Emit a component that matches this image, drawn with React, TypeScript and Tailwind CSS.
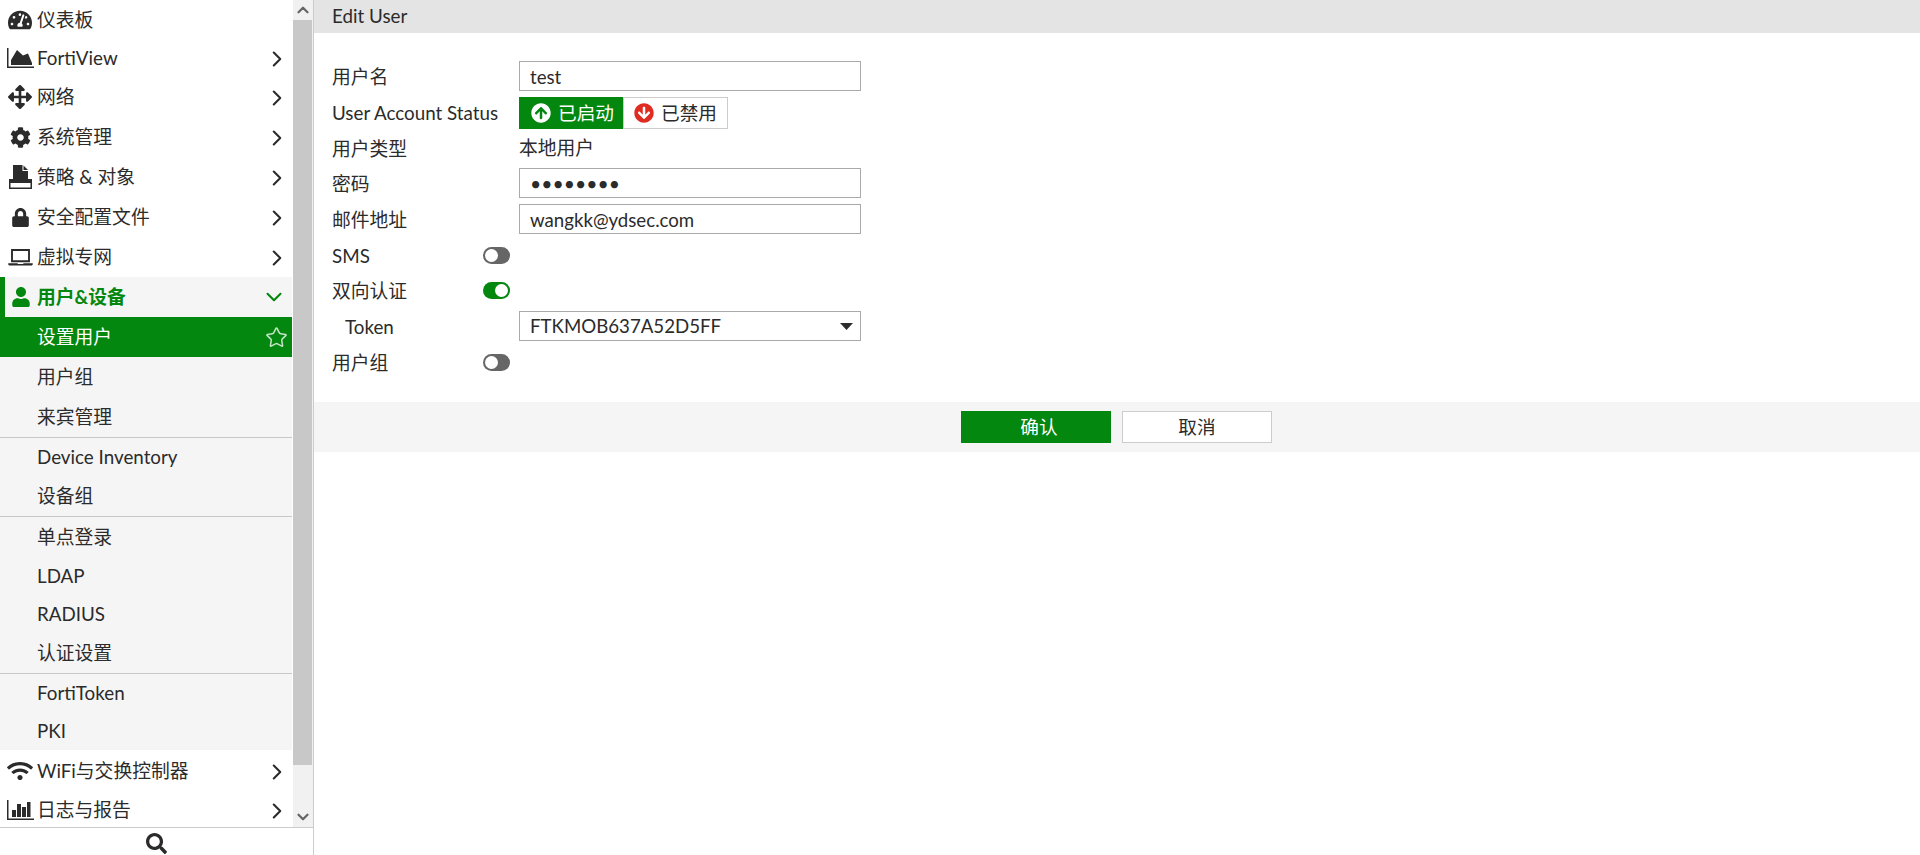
import { ChevronDown, ChevronRight, ChevronUp, Star } from 'lucide-react';
import { FaArrowCircleDown, FaArrowCircleUp, FaArrowsAlt, FaCog, FaLock, FaSearch, FaTachometerAlt, FaUser, FaWifi } from 'react-icons/fa';

const font = "font-['Lato','Noto_Sans_CJK_SC',sans-serif]";

function AreaIcon() {
  return (
    <svg width="27" height="20" viewBox="0 0 27 20" className="fill-[#2b2b2b]">
      <path d="M0 0h1.500v18.500H27V20H0z" />
      <path d="M4 17V12L10 2l6 5.500 5-2 4 9.500V17z" />
    </svg>
  );
}

function BarsIcon() {
  return (
    <svg width="27" height="20" viewBox="0 0 27 20" className="fill-[#2b2b2b]">
      <path d="M0 0h1.500v18.500H27V20H0z" />
      <path d="M5 10h4v7H5zM10 4h4v13h-4zM15 7h4v10h-4zM20 2h3.500v15H20z" />
    </svg>
  );
}

function PolicyIcon() {
  return (
    <svg width="23" height="24" viewBox="0 0 23 24" className="fill-[#2b2b2b]">
      <path d="M4 0h9.500v6H19v10H4z" />
      <path d="M14.500 0.500l4.500 4.500h-4.500z" />
      <path d="M0 14h23v10H0zm1.500 4v4.500h20V18z" fillRule="evenodd" />
    </svg>
  );
}

function LaptopIcon() {
  return (
    <svg width="25" height="17" viewBox="0 0 26 18" className="fill-[#2b2b2b]">
      <path d="M3 0h20v14H3zm2 2v10h16V2z" fillRule="evenodd" />
      <path d="M0 15h10v1h6v-1h10v1.500l-1 1H1l-1-1z" />
    </svg>
  );
}

function NavRow({ icon, label, h, arrow = true }: { icon: React.ReactNode; label: string; h: string; arrow?: boolean }) {
  return (
    <div className={`flex items-center ${h}`}>
      <span className="flex w-[37px] shrink-0 items-center justify-center pl-[3px]">{icon}</span>
      <span className="flex-1 text-[18.8px] leading-[24px]">{label}</span>
      {arrow && <ChevronRight size={26} strokeWidth={1.9} className="mr-[3px] mt-[2px] text-[#2b2b2b]" />}
    </div>
  );
}

function SubRow({ label, h, active }: { label: string; h: string; active?: boolean }) {
  return (
    <div className={`flex items-center pl-[37px] text-[18.8px] leading-[24px] ${h} ${active ? 'bg-[#03870f] text-white' : ''}`}>
      <span className="flex-1">{label}</span>
      {active && <Star size={23} strokeWidth={1.6} className="mr-[4px] text-[#c4e3c6]" />}
    </div>
  );
}

function Toggle({ on }: { on?: boolean }) {
  return (
    <div className={`flex h-[17px] w-[27px] items-center rounded-full p-[2px] ${on ? 'justify-end bg-[#03870f]' : 'justify-start bg-[#666666]'}`}>
      <div className="h-[13px] w-[13px] rounded-full bg-white" />
    </div>
  );
}

const inputCls = `h-[30px] w-[342px] border border-[#aaaaaa] bg-white px-[10px] pt-[1px] text-[#2b2b2b] outline-none ${font}`;

function Label({ children, w = 'w-[187px]' }: { children: React.ReactNode; w?: string }) {
  return <div className={`${w} shrink-0 text-[18.8px] leading-[24px]`}>{children}</div>;
}

export default function App() {
  return (
    <div className={`flex h-[855px] w-[1920px] overflow-hidden bg-white text-[#2b2b2b] ${font}`}>
      {/* sidebar */}
      <aside className="flex w-[314px] shrink-0 flex-col border-r border-[#cccccc]">
        <div className="flex h-[828px] border-b border-[#cccccc]">
          <nav className="w-[293px] shrink-0">
            <div className="pt-[1px]"><NavRow h="h-[37px]" icon={<FaTachometerAlt size={24} />} label="仪表板" arrow={false} /></div>
            <NavRow h="h-[39px]" icon={<AreaIcon />} label="FortiView" />
            <NavRow h="h-[40px]" icon={<FaArrowsAlt size={24} />} label="网络" />
            <NavRow h="h-[40px]" icon={<FaCog size={21} />} label="系统管理" />
            <NavRow h="h-[40px]" icon={<PolicyIcon />} label="策略 & 对象" />
            <NavRow h="h-[40px]" icon={<FaLock size={19} />} label="安全配置文件" />
            <NavRow h="h-[40px]" icon={<LaptopIcon />} label="虚拟专网" />
            <div className="mr-[1px] bg-[#f5f5f5]">
              <div className="flex h-[40px] items-center border-l-[5px] border-[#03870f] text-[#03870f]">
                <span className="flex w-[32px] shrink-0 items-center justify-center"><FaUser size={20} /></span>
                <span className="flex-1 text-[18.8px] font-bold leading-[24px]">用户&设备</span>
                <ChevronDown size={26} strokeWidth={1.9} className="mr-[5px]" />
              </div>
              <SubRow h="h-[40px]" label="设置用户" active />
              <SubRow h="h-[40px]" label="用户组" />
              <SubRow h="h-[40px]" label="来宾管理" />
              <div className="border-t border-[#c8c8c8]">
                <SubRow h="h-[38px]" label="Device Inventory" />
                <SubRow h="h-[40px]" label="设备组" />
              </div>
              <div className="border-t border-[#c8c8c8]">
                <SubRow h="h-[40px]" label="单点登录" />
                <SubRow h="h-[37px]" label="LDAP" />
                <SubRow h="h-[39px]" label="RADIUS" />
                <SubRow h="h-[40px]" label="认证设置" />
              </div>
              <div className="border-t border-[#c8c8c8]">
                <SubRow h="h-[38px]" label="FortiToken" />
                <SubRow h="h-[38px]" label="PKI" />
              </div>
            </div>
            <NavRow h="h-[41px]" icon={<FaWifi size={26} />} label="WiFi与交换控制器" />
            <div className="pt-[1px]"><NavRow h="h-[35px]" icon={<BarsIcon />} label="日志与报告" /></div>
          </nav>
          {/* scrollbar */}
          <div className="flex w-[20px] shrink-0 flex-col bg-[#f1f1f1]">
            <div className="flex h-[20px] items-center justify-center"><ChevronUp size={18} strokeWidth={3} className="text-[#666666]" /></div>
            <div className="h-[745px] w-[19px] bg-[#c8c8c8]" />
            <div className="mt-auto flex h-[20px] items-center justify-center"><ChevronDown size={18} strokeWidth={3} className="text-[#666666]" /></div>
          </div>
        </div>
        <div className="flex flex-1 items-center justify-center pt-[3px]"><FaSearch size={21} /></div>
      </aside>

      {/* main */}
      <main className="flex-1">
        <header className="flex h-[33px] items-center bg-[#e4e4e4] pb-[1px] pl-[18px] text-[18.8px]">Edit User</header>
        <form className="flex flex-col gap-[6px] pb-[25px] pl-[18px] pt-[28px]">
          <div className="flex items-center">
            <div className="pt-[2px]"><Label>用户名</Label></div>
            <input className={`${inputCls} text-[18.67px]`} value="test" readOnly />
          </div>
          <div className="flex h-[32px] items-center">
            <Label>User Account Status</Label>
            <div className="flex h-[32px] w-[104px] items-center gap-[7px] bg-[#03870f] pl-[12px] text-[18.67px] text-white">
              <FaArrowCircleUp size={20} className="text-white" />
              <span>已启动</span>
            </div>
            <div className="flex h-[32px] w-[105px] items-center gap-[7px] border border-[#cccccc] pl-[10px] text-[18.67px]">
              <FaArrowCircleDown size={20} className="text-[#e02b20]" />
              <span>已禁用</span>
            </div>
          </div>
          <div className="flex h-[27px] items-center">
            <Label>用户类型</Label>
            <span className="text-[18.8px]">本地用户</span>
          </div>
          <div className="flex items-center">
            <div className="pt-[2px]"><Label>密码</Label></div>
            <input type="password" className={`${inputCls} text-[19.4px]`} value="12345678" readOnly />
          </div>
          <div className="flex items-center">
            <div className="pt-[2px]"><Label>邮件地址</Label></div>
            <input className={`${inputCls} text-[18.67px]`} value="wangkk@ydsec.com" readOnly />
          </div>
          <div className="flex h-[30px] items-center">
            <div className="pt-[2px]"><Label w="w-[151px]">SMS</Label></div>
            <Toggle />
          </div>
          <div className="flex h-[29px] items-center">
            <Label w="w-[151px]">双向认证</Label>
            <Toggle on />
          </div>
          <div className="flex items-center">
            <div className="pt-[2px]"><Label><span className="pl-[13px]">Token</span></Label></div>
            <div className="flex h-[30px] w-[342px] items-center justify-between border border-[#aaaaaa] pl-[10px] pr-[7px] text-[18.67px]">
              <span>FTKMOB637A52D5FF</span>
              <svg width="13" height="7" viewBox="0 0 13 7" className="fill-[#2b2b2b]"><path d="M0 0h13L6.500 7z" /></svg>
            </div>
          </div>
          <div className="flex h-[30px] items-center">
            <div className="pt-[2px]"><Label w="w-[151px]">用户组</Label></div>
            <Toggle />
          </div>
        </form>
        <footer className="flex h-[50px] items-center justify-center gap-[11px] bg-[#f5f5f5] pr-[1px]">
          <button type="button" className="h-[32px] w-[150px] bg-[#03870f] pl-[6px] text-[18.67px] text-white">确认</button>
          <button type="button" className="h-[32px] w-[150px] border border-[#cccccc] bg-white text-[18.67px]">取消</button>
        </footer>
      </main>
    </div>
  );
}
